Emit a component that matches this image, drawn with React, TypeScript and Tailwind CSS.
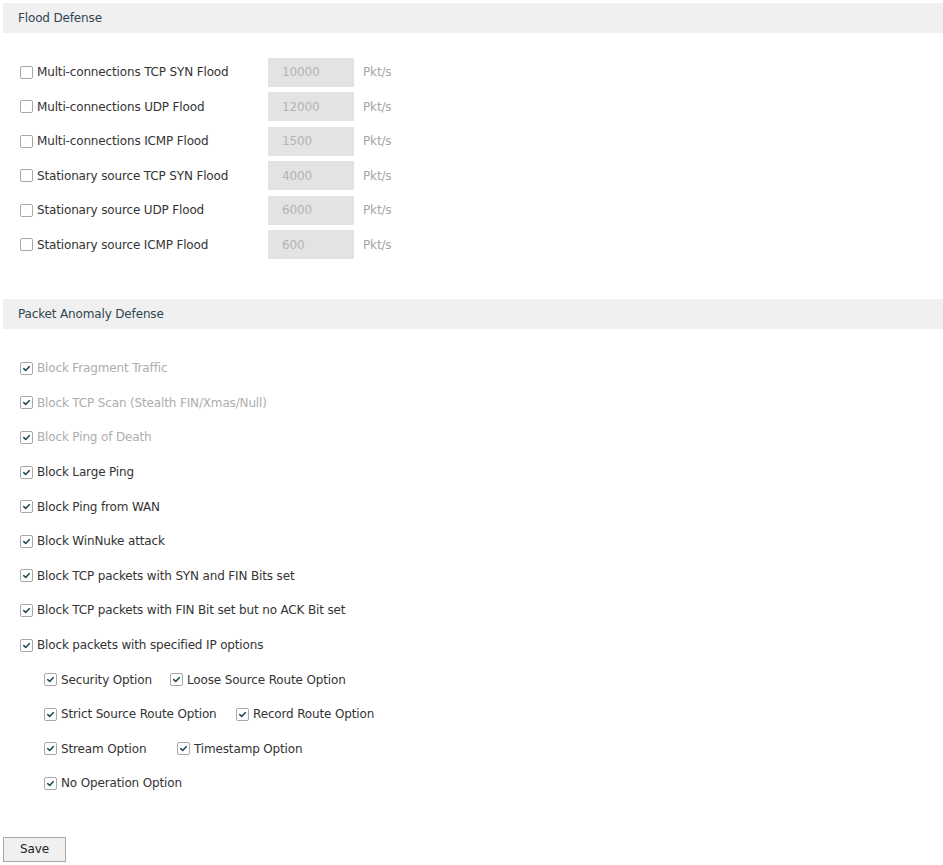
import React from "react";

type FloodRow = { label: string; value: string };

const FLOOD: FloodRow[] = [
  { label: "Multi-connections TCP SYN Flood", value: "10000" },
  { label: "Multi-connections UDP Flood", value: "12000" },
  { label: "Multi-connections ICMP Flood", value: "1500" },
  { label: "Stationary source TCP SYN Flood", value: "4000" },
  { label: "Stationary source UDP Flood", value: "6000" },
  { label: "Stationary source ICMP Flood", value: "600" },
];

const ANOMALY: { label: string; disabled?: boolean }[] = [
  { label: "Block Fragment Traffic", disabled: true },
  { label: "Block TCP Scan (Stealth FIN/Xmas/Null)", disabled: true },
  { label: "Block Ping of Death", disabled: true },
  { label: "Block Large Ping" },
  { label: "Block Ping from WAN" },
  { label: "Block WinNuke attack" },
  { label: "Block TCP packets with SYN and FIN Bits set" },
  { label: "Block TCP packets with FIN Bit set but no ACK Bit set" },
  { label: "Block packets with specified IP options" },
];

const IP_OPTIONS: { label: string; w: string }[][] = [
  [
    { label: "Security Option", w: "w-[126px]" },
    { label: "Loose Source Route Option", w: "" },
  ],
  [
    { label: "Strict Source Route Option", w: "w-[192px]" },
    { label: "Record Route Option", w: "" },
  ],
  [
    { label: "Stream Option", w: "w-[133px]" },
    { label: "Timestamp Option", w: "" },
  ],
  [{ label: "No Operation Option", w: "" }],
];

function Box({ checked }: { checked?: boolean }) {
  return (
    <span className="flex size-[13px] shrink-0 items-center justify-center rounded-[2px] border border-[#a8a8a8] bg-white">
      {checked && (
        <svg viewBox="0 0 10 10" className="size-[9px]">
          <path
            d="M2 5.2 L4.1 7.2 L8 3"
            fill="none"
            stroke="#1d4a58"
            strokeWidth="1.8"
            strokeLinecap="round"
            strokeLinejoin="round"
          />
        </svg>
      )}
    </span>
  );
}

function Header({ title }: { title: string }) {
  return (
    <div className="flex h-[30px] items-center bg-[#f0f0f0] pl-[15px] text-[#2f4651]">
      {title}
    </div>
  );
}

export default function App() {
  return (
    <div className="min-h-[865px] bg-white pt-[3px] pl-[3px] text-[12px] text-[#333] [font-family:'DejaVu_Sans',Verdana,sans-serif] tracking-[-0.15px]">
      <Header title="Flood Defense" />

      <div className="pt-[22px] pb-[37px]">
        {FLOOD.map((r) => (
          <div key={r.label} className="flex h-[34.5px] items-center pl-[17px]">
            <div className="flex w-[248px] items-center gap-[4px]">
              <Box />
              <span>{r.label}</span>
            </div>
            <div className="flex h-[29px] w-[86px] items-center bg-[#e3e3e3] pl-[14px] text-[#b3b3b3]">
              {r.value}
            </div>
            <span className="ml-[9px] text-[#a6a6a6]">Pkt/s</span>
          </div>
        ))}
      </div>

      <Header title="Packet Anomaly Defense" />

      <div className="pt-[22px] pb-[36px]">
        {ANOMALY.map((r) => (
          <div key={r.label} className="flex h-[34.6px] items-center gap-[4px] pl-[17px]">
            <Box checked />
            <span className={r.disabled ? "text-[#adadad]" : ""}>{r.label}</span>
          </div>
        ))}
        {IP_OPTIONS.map((row, i) => (
          <div key={i} className="flex h-[34.6px] items-center pl-[41px]">
            {row.map((o) => (
              <div key={o.label} className={`flex items-center gap-[4px] ${o.w}`}>
                <Box checked />
                <span>{o.label}</span>
              </div>
            ))}
          </div>
        ))}
      </div>

      <button className="h-[25px] w-[63px] border border-[#a8a8a8] bg-[#f0f0f0] text-[12px] text-[#222]">
        Save
      </button>
    </div>
  );
}
